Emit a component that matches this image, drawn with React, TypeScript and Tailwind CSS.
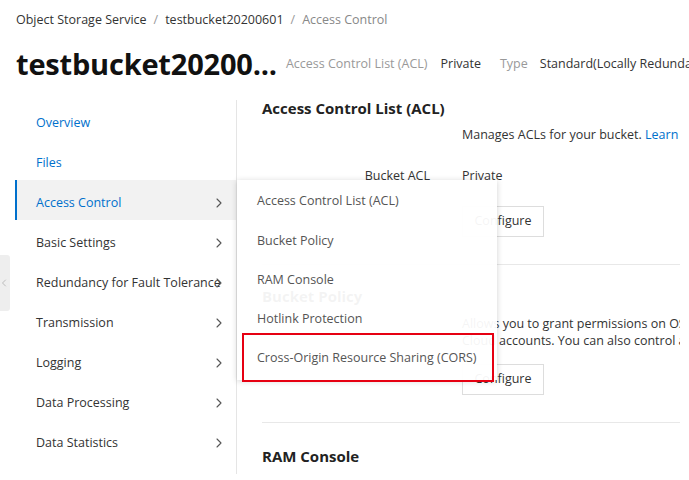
import { ChevronRight, ChevronLeft } from 'lucide-react';

const navItems = [
  { label: 'Overview', blue: true },
  { label: 'Files', blue: true },
  { label: 'Access Control', blue: true, active: true, arrow: true },
  { label: 'Basic Settings', arrow: true },
  { label: 'Redundancy for Fault Tolerance', arrow: true },
  { label: 'Transmission', arrow: true },
  { label: 'Logging', arrow: true },
  { label: 'Data Processing', arrow: true },
  { label: 'Data Statistics', arrow: true },
];

const menuItems = [
  'Access Control List (ACL)',
  'Bucket Policy',
  'RAM Console',
  'Hotlink Protection',
  'Cross-Origin Resource Sharing (CORS)',
];

export default function App() {
  return (
    <div
      className="relative w-[689px] h-[480px] overflow-hidden bg-white text-[#333] text-[12.5px]"
      style={{ fontFamily: '"Open Sans", "Noto Sans", sans-serif' }}
    >
      {/* header */}
      <div className="px-4 pt-[10px]">
        <div className="flex items-center gap-[7px] h-5 text-[12.5px]">
          <span className="text-[#333]">Object Storage Service</span>
          <span className="text-[#999]">/</span>
          <span className="text-[#333]">testbucket20200601</span>
          <span className="text-[#999]">/</span>
          <span className="text-[#888]">Access Control</span>
        </div>
        <div className="flex items-center h-[48px] mt-[10px] whitespace-nowrap">
          <h1 className="text-[29px] font-bold text-[#111] tracking-[-0.2px]">testbucket20200...</h1>
          <span className="ml-[9px] text-[#999]">Access Control List (ACL)</span>
          <span className="ml-[13px] text-[#333]">Private</span>
          <span className="ml-[19px] text-[#999]">Type</span>
          <span className="ml-[12px] text-[#333]">Standard(Locally Redundant Storage)</span>
        </div>
      </div>

      {/* body */}
      <div className="flex mt-[14px]">
        <nav className="ml-[15px] w-[222px] h-[374px] border-r border-[#e5e5e5] -mt-[2px]">
          {navItems.map((item) => (
            <div
              key={item.label}
              className={
                'relative flex items-center h-10 pl-[19px] pt-[6px] whitespace-nowrap ' +
                (item.active ? 'bg-[#f2f2f2] border-l-2 border-[#0070cc]' : 'border-l-2 border-transparent')
              }
            >
              <span className={item.blue ? 'text-[#0070cc]' : 'text-[#333]'}>{item.label}</span>
              {item.arrow && (
                <ChevronRight
                  size={16}
                  strokeWidth={1.6}
                  className="absolute right-[9px] top-[15px] text-[#555]"
                />
              )}
            </div>
          ))}
        </nav>

        <main className="flex-1 pl-[25px] mr-[9px] -mt-[4px] whitespace-nowrap overflow-hidden">
          <section className="border-b border-[#e8e8e8] pb-[27px]">
            <h2 className="text-[15px] font-bold text-[#222] h-5 leading-5">Access Control List (ACL)</h2>
            <div className="grid grid-cols-[168px_1fr] gap-x-[32px] mt-[7px]">
              <div />
              <div className="h-5 leading-5">
                Manages ACLs for your bucket. <span className="text-[#0070cc]">Learn more</span>
              </div>
              <div className="text-right h-5 leading-5 mt-[21px]">Bucket ACL</div>
              <div className="h-5 leading-5 mt-[21px]">Private</div>
              <div />
              <div className="mt-[20px]">
                <button className="h-[31px] w-[82px] border border-[#ddd] bg-white text-[#333]">Configure</button>
              </div>
            </div>
          </section>

          <section className="border-b border-[#e8e8e8] pb-[27px] pt-[21px]">
            <h2 className="text-[15px] font-bold text-[#222] h-5 leading-5">Bucket Policy</h2>
            <div className="grid grid-cols-[168px_1fr] gap-x-[32px] mt-[9px]">
              <div />
              <div className="leading-[17px]">
                <div>Allows you to grant permissions on OSS resources to other Alibaba</div>
                <div>Cloud accounts. You can also control access by IP address.</div>
              </div>
              <div />
              <div className="mt-[15px]">
                <button className="h-[31px] w-[82px] border border-[#ddd] bg-white text-[#333]">Configure</button>
              </div>
            </div>
          </section>

          <section className="pt-[23px]">
            <h2 className="text-[15px] font-bold text-[#222] h-5 leading-5">RAM Console</h2>
          </section>
        </main>
      </div>

      {/* collapse tab */}
      <div className="absolute left-0 top-[255px] w-[10px] h-[56px] bg-[#eeeeee] rounded-r-[3px] flex items-center justify-center">
        <ChevronLeft size={12} strokeWidth={1.5} className="text-[#aaa] -ml-[3px]" />
      </div>

      {/* submenu */}
      <div className="absolute left-[237px] top-[180px] w-[260px] h-[200px] bg-white/95 shadow-[0_1px_6px_rgba(0,0,0,0.18)] pt-[2px]">
        {menuItems.map((m) => (
          <div key={m} className="h-[39.3px] flex items-center pl-[20px] text-[#555] whitespace-nowrap">
            {m}
          </div>
        ))}
        <div className="absolute left-[5px] top-[153px] w-[252px] h-[49px] border-2 border-[#e60012]" />
      </div>
    </div>
  );
}
